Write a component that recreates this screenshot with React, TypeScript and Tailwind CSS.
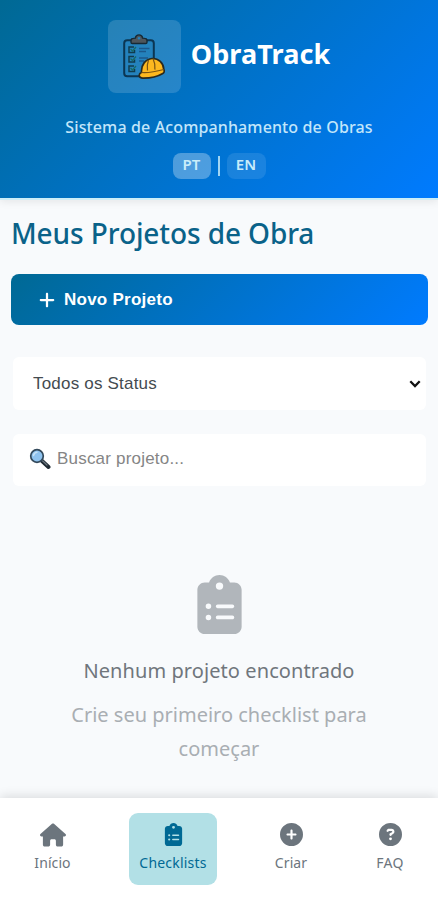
import { useState } from 'react';
import { FaCirclePlus, FaCircleQuestion, FaClipboardList, FaHouse, FaPlus } from 'react-icons/fa6';

const navItems = [
  { id: 'home', label: 'Início', icon: FaHouse, box: 'w-[87px]', iconSize: 'text-[26px]', text: 'tracking-[0.1px]' },
  { id: 'checklists', label: 'Checklists', icon: FaClipboardList, box: 'w-[88px] ml-[33px]', iconSize: 'text-[23px]', text: 'tracking-[0.2px]' },
  { id: 'create', label: 'Criar', icon: FaCirclePlus, box: 'w-[58px] ml-[45px]', iconSize: 'text-[23px]', text: 'tracking-[0.1px]' },
  { id: 'faq', label: 'FAQ', icon: FaCircleQuestion, box: 'w-[58px] ml-[41px]', iconSize: 'text-[23px]', text: 'tracking-[0.3px]' },
];

function LogoIcon() {
  return (
    <svg viewBox="0 0 42 46" className="w-[42px] h-[46px]" fill="none">
      <rect x="1.2" y="6.2" width="29.6" height="36" rx="3" fill="#2482bd" stroke="#0b3653" strokeWidth="2" />
      <path d="M8 8.2V6.5c0-1.3 1-2 2.3-2.1l2-.3C12.7 2 14 .9 16 .9s3.300 1.100 3.700 3.200l2 .3c1.300.1 2.300.8 2.300 2.100v1.700c0 .8-.5 1.300-1.300 1.300H9.300C8.500 9.500 8 9 8 8.200Z" fill="#4e565c" stroke="#182a35" strokeWidth="1.400" />
      <circle cx="16" cy="4.200" r="1.200" fill="#2482bd" />
      <path d="M11 13H6v5.500h5.500V16M11 22.500H6V28h5.500v-2.500M11 32H6v5.500h5.500V35" stroke="#103c4d" strokeWidth="1.500" />
      <path d="m7.500 15 2 2 3.500-4M7.500 24.500l2 2 3.500-4M7.500 34l2 2 3.500-4" stroke="#176a66" strokeWidth="1.300" />
      <path d="M16 14.500h10.500M16 17.500h7M16 24h9M16 27h5" stroke="#1b588c" strokeWidth="1.300" />
      <path d="M18.500 38.500c-.6-7.500 4-13.500 10.500-14 6.500-.4 11.500 4.500 11.800 11 .9 1.300.5 3-1 3.900-5 3-12.500 4.800-20 4.700-2.100 0-3.700-1.200-3.600-2.900.1-1.500 1-2.300 2.300-2.700Z" fill="#fdb81f" stroke="#2b2a1e" strokeWidth="1.700" strokeLinejoin="round" />
      <path d="M18.500 38.500c7 .5 15-1 22.300-3M25.500 26c-1.300 3.500-1.500 7-1 10.500M30 24.600c1.600 3.400 2.200 7 1.900 11" stroke="#7a5413" strokeWidth="1.200" />
    </svg>
  );
}

function SearchGlyph() {
  return (
    <svg viewBox="0 0 22 22" className="w-[22px] h-[22px] shrink-0" fill="none">
      <path d="m12.500 12.500 7 6.500" stroke="#1f2a33" strokeWidth="4" strokeLinecap="round" />
      <path d="m13.500 12.800 4.500 4.200" stroke="#6d7880" strokeWidth="1.200" strokeLinecap="round" />
      <circle cx="8" cy="8" r="6.300" fill="#8fc3ef" stroke="#33495b" strokeWidth="1.700" />
      <path d="M4.500 7.500A4 4 0 0 1 8 4.200" stroke="#c8e3f8" strokeWidth="1.500" strokeLinecap="round" />
    </svg>
  );
}

export default function App() {
  const [lang, setLang] = useState('PT');
  const [tab, setTab] = useState('checklists');
  const [query, setQuery] = useState('');

  return (
    <div className="flex flex-col w-[438px] h-[900px] overflow-hidden bg-[#f8fafc] font-['Noto_Sans','Open_Sans',sans-serif]">
      <header className="relative z-10 h-[200px] shrink-0 flex flex-col items-center pt-5 bg-[linear-gradient(135deg,#006994,#007bff)] border-b-2 border-[#cdeef8] shadow-[0_2px_8px_rgba(0,0,0,0.08)]">
        <div className="flex items-center gap-[10px]">
          <div className="w-[73px] h-[73px] rounded-lg bg-white/15 flex items-center justify-center">
            <LogoIcon />
          </div>
          <h1 className="text-[27px] leading-9 font-bold text-white tracking-[0.1px] whitespace-nowrap -mt-[6px]">ObraTrack</h1>
        </div>
        <p className="mt-[23px] text-base leading-[22px] font-medium text-[#c3e6fa] tracking-[0.13px] whitespace-nowrap">Sistema de Acompanhamento de Obras</p>
        <div className="mt-[15px] flex items-center text-[#c9edfa] font-semibold">
          <button
            onClick={() => setLang('PT')}
            className={lang === 'PT' ? 'w-[38px] h-[26px] pb-[3px] rounded-lg bg-white/30 text-[15px] leading-none' : 'w-[38px] h-[26px] pb-[3px] rounded-lg bg-white/10 text-[15px] leading-none'}
          >
            PT
          </button>
          <span className="w-[2px] h-5 mx-[7px] -mt-[1px] bg-[#c9edfa]/80" />
          <button
            onClick={() => setLang('EN')}
            className={lang === 'EN' ? 'w-[39px] h-[26px] pb-[3px] rounded-lg bg-white/30 text-[15px] leading-none' : 'w-[39px] h-[26px] pb-[3px] rounded-lg bg-white/10 text-[15px] leading-none'}
          >
            EN
          </button>
        </div>
      </header>

      <main className="flex-1 min-h-0 px-[11px] pt-[13px]">
        <h2 className="text-[28px] leading-10 font-medium text-[#0a6289] tracking-[-0.1px] whitespace-nowrap">Meus Projetos de Obra</h2>

        <button className="mt-[21px] w-[417px] h-[51px] rounded-lg flex items-center pl-[28px] text-white bg-[linear-gradient(135deg,#006994,#007bff)]">
          <FaPlus className="w-4 h-[18px]" />
          <span className="ml-[9px] font-['Liberation_Sans',sans-serif] font-bold text-[17px] tracking-[0.25px]">Novo Projeto</span>
        </button>

        <div className="mt-8 ml-[2px] w-[413px] h-[53px] rounded-md bg-white relative">
          <select className="w-full h-full pl-5 appearance-none bg-transparent outline-none font-['Liberation_Sans',sans-serif] text-[17px] tracking-[0.2px] text-[#444b50]">
            <option>Todos os Status</option>
            <option>Em Andamento</option>
            <option>Concluído</option>
          </select>
          <svg viewBox="0 0 12 8" className="absolute right-[5px] top-[23px] w-3 h-2 pointer-events-none" fill="none">
            <path d="m1.300 1.300 4.700 4.700 4.700-4.700" stroke="#111" strokeWidth="2.300" />
          </svg>
        </div>

        <label className="mt-6 ml-[2px] w-[413px] h-[52px] rounded-md bg-white flex items-center pl-4 pb-[2px]">
          <SearchGlyph />
          <input
            value={query}
            onChange={(e) => setQuery(e.target.value)}
            placeholder="Buscar projeto..."
            className="ml-[6px] flex-1 outline-none bg-transparent font-['Liberation_Sans',sans-serif] text-[17px] tracking-[0.2px] placeholder:text-[#858585]"
          />
        </label>

        <div className="mt-[89px] flex flex-col items-center text-center">
          <FaClipboardList className="w-[45px] h-[59px] text-[#b1b6bb]" />
          <h3 className="mt-[20px] text-[20px] leading-[34px] text-[#70767c] tracking-[0.08px] whitespace-nowrap">Nenhum projeto encontrado</h3>
          <p className="mt-[10px] w-[320px] text-[20px] leading-[34px] text-[#a9aeb3]">
            Crie seu primeiro checklist para começar
          </p>
        </div>
      </main>

      <nav className="relative z-10 h-[102px] shrink-0 flex items-start pt-[15px] pl-[9px] bg-white shadow-[0_-2px_10px_rgba(0,0,0,0.12)]">
        {navItems.map((item) => (
          <button
            key={item.id}
            onClick={() => setTab(item.id)}
            className={`${item.box} h-[72px] rounded-[9px] flex flex-col items-center pt-[10px] ${
              tab === item.id ? 'bg-[#b2e0e6] text-[#006994]' : 'text-[#6c757d]'
            }`}
          >
            <span className={`h-[23px] flex items-center ${item.iconSize}`}>
              <item.icon />
            </span>
            <span className={`mt-[7px] text-sm leading-5 whitespace-nowrap ${item.text}`}>{item.label}</span>
          </button>
        ))}
      </nav>
    </div>
  );
}
